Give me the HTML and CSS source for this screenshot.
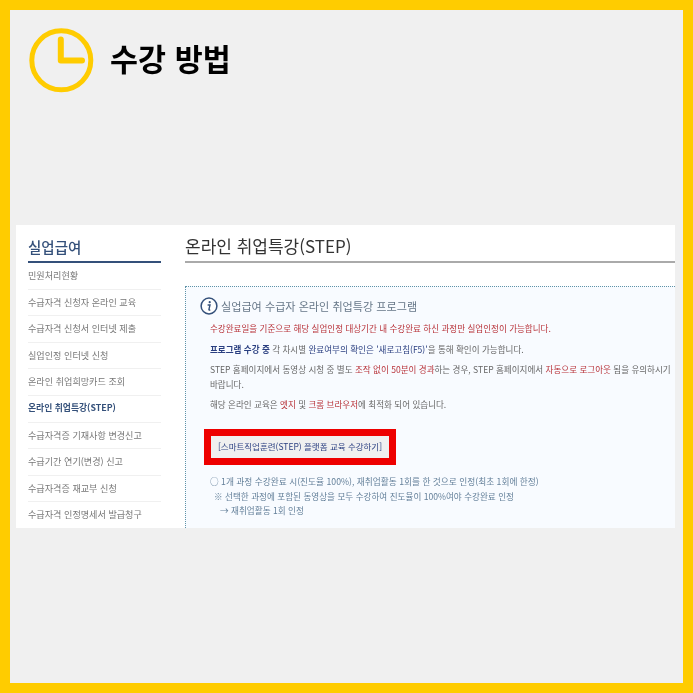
FILE: index.html
```html
<!DOCTYPE html>
<html lang="ko">
<head>
<meta charset="utf-8">
<title>수강 방법</title>
<link rel="stylesheet" href="styles.css">
</head>
<body>
<div class="frame">
  <header class="head">
    <svg class="clock" viewBox="0 0 66 66" aria-hidden="true">
      <circle cx="32.3" cy="32.3" r="29.5" fill="none" stroke="#ffcc00" stroke-width="5"/>
      <path d="M31.8 11.5V32.5H53" fill="none" stroke="#ffcc00" stroke-width="6" stroke-linecap="round" stroke-linejoin="round"/>
    </svg>
    <h1 class="head-title">수강 방법</h1>
  </header>
  <section class="panel">
    <aside class="side">
      <h2 class="side-title">실업급여</h2>
      <ul class="side-list">
        <li class="side-item">민원처리현황</li>
        <li class="side-item">수급자격 신청자 온라인 교육</li>
        <li class="side-item">수급자격 신청서 인터넷 제출</li>
        <li class="side-item">실업인정 인터넷 신청</li>
        <li class="side-item">온라인 취업희망카드 조회</li>
        <li class="side-item side-active">온라인 취업특강(STEP)</li>
        <li class="side-item">수급자격증 기재사항 변경신고</li>
        <li class="side-item">수급기간 연기(변경) 신고</li>
        <li class="side-item">수급자격증 재교부 신청</li>
        <li class="side-item">수급자격 인정명세서 발급청구</li>
      </ul>
    </aside>
    <main class="main">
      <h2 class="main-title">온라인 취업특강(STEP)</h2>
      <div class="box">
        <div class="box-head">
          <svg class="info" viewBox="0 0 18 18" aria-hidden="true">
            <circle cx="9" cy="9" r="7.9" fill="#fff" stroke="#34507a" stroke-width="1.5"/>
            <circle cx="9.7" cy="5.2" r="1.1" fill="#34507a"/>
            <path d="M7.6 8H10L8.9 12.6Q8.8 13.4 10.3 12.8" fill="none" stroke="#34507a" stroke-width="1.4"/>
          </svg>
          <span class="box-title">실업급여 수급자 온라인 취업특강 프로그램</span>
        </div>
        <p class="line red l1">수강완료일을 기준으로 해당 실업인정 대상기간 내 수강완료 하신 과정만 실업인정이 가능합니다.</p>
        <p class="line l2"><b class="navy">프로그램 수강 중</b> 각 차시별 <span class="navy">완료여부의 확인은 '새로고침(F5)'</span>을 통해 확인이 가능합니다.</p>
        <p class="line l3">STEP 홈페이지에서 동영상 시청 중 별도 <span class="red">조작 없이 50분이 경과</span>하는 경우, STEP 홈페이지에서 <span class="red">자동으로 로그아웃</span> 됨을 유의하시기 바랍니다.</p>
        <p class="line l4">해당 온라인 교육은 <span class="red">엣지</span> 및 <span class="red">크롬 브라우저</span>에 최적화 되어 있습니다.</p>
        <div class="cta"><span class="cta-btn">[스마트직업훈련(STEP) 플랫폼 교육 수강하기]</span></div>
        <p class="note n1">○ 1개 과정 수강완료 시(진도율 100%), 재취업활동 1회를 한 것으로 인정(최초 1회에 한정)</p>
        <p class="note n2">※ 선택한 과정에 포함된 동영상을 모두 수강하여 진도율이 100%여야 수강완료 인정</p>
        <p class="note n3">→ 재취업활동 1회 인정</p>
      </div>
    </main>
  </section>
</div>
</body>
</html>
```
FILE: styles.css
```css
* { box-sizing: border-box; margin: 0; padding: 0; }
html, body { width: 693px; height: 693px; overflow: hidden; }
body { font-family: "Noto Sans CJK KR", "Noto Sans", sans-serif; background: #f0f0f0; }
.frame { width: 693px; height: 693px; border: 10px solid #ffcc00; background: #f0f0f0; padding: 18px 8px 0 6px; }
.head { display: flex; align-items: center; height: 65px; padding-left: 13px; }
.clock { width: 66px; height: 66px; flex: none; overflow: visible; }
.head-title { margin-left: 15px; padding-bottom: 6px; font-size: 30.4px; line-height: 40px; font-weight: 700; color: #000; letter-spacing: 0.1px; filter: blur(0.3px); }
.panel { display: flex; height: 303px; margin-top: 132px; background: #fff; overflow: hidden; filter: blur(0.45px); }
.side { width: 169px; flex: none; padding: 12px 0 0 12px; }
.side-title { width: 133px; height: 26px; font-size: 14.5px; line-height: 20px; font-weight: 500; color: #34507a; border-bottom: 2px solid #34507a; }
.side-list { list-style: none; width: 133px; }
.side-item { height: 26.6px; font-size: 9.1px; line-height: 24.5px; color: #777; border-bottom: 1px solid #f0f0f0; white-space: nowrap; }
.side-item:last-child { border-bottom: 0; }
.side-active { color: #34507a; font-size: 8.8px; font-weight: 700; }
.main { width: 490px; flex: none; padding-top: 7px; }
.main-title { height: 31px; font-size: 17px; line-height: 27px; font-weight: 400; color: #333; border-bottom: 2px solid #aaa; }
.box { height: 300px; margin-top: 23px; padding: 10px 0 0 14px; background: #f8fbff; border-top: 1px dotted #5f93a8; border-left: 1px dotted #5f93a8; }
.box-head { display: flex; align-items: center; height: 18px; }
.info { width: 18px; height: 18px; flex: none; }
.box-title { margin-left: 3px; font-size: 11.1px; line-height: 18px; color: #667788; white-space: nowrap; }
.line { margin-left: 10px; width: 465px; font-size: 8.55px; line-height: 15px; color: #666; }
.line.red, .red { color: #b8333a; }
.navy { color: #2a3f80; }
.l1 { margin-top: 6px; }
.l2 { margin-top: 6px; }
.l3 { margin-top: 5px; }
.l4 { margin-top: 5px; }
.cta { display: block; width: 192px; height: 36px; margin: 17px 0 0 4px; padding: 7px; background: #ee0000; }
.cta-btn { display: block; height: 22px; background: #f0f0f0; font-size: 8.5px; line-height: 21px; text-align: center; color: #2a3f80; white-space: nowrap; }
.note { font-size: 8.6px; line-height: 14px; color: #64809a; white-space: nowrap; }
.n1 { margin: 10px 0 0 10px; font-size: 8.7px; }
.n2 { margin-left: 14px; }
.n3 { margin-left: 20px; }
```
